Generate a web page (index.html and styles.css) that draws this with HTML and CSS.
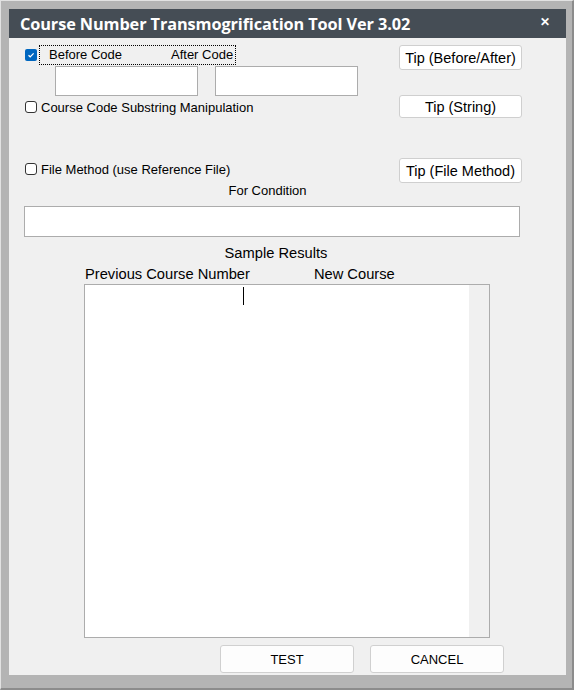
FILE: index.html
```html
<html>
<head>
	<link rel="stylesheet" href="styles.css">
</head>
<body>
<div class="frame">
	<div class="titlebar">
		<span class="title">Course Number Transmogrification Tool Ver 3.02</span>
		<span class="close">&#10005;</span>
	</div>
	<div class="content">
		<div class="top">
			<div class="options">
				<div class="opt-before">
					<span class="check checked">
						<svg width="12" height="12" viewBox="0 0 12 12"><path d="M3.5 6.2 L5.2 7.8 L8.6 4.3" fill="none" stroke="#fff" stroke-width="1.2"/></svg>
					</span>
					<span class="focus-label">
						<span class="lbl-before">Before Code</span>
						<span class="lbl-after">After Code</span>
					</span>
				</div>
				<div class="codes">
					<input type="text" class="code-box first">
					<input type="text" class="code-box second">
				</div>
				<div class="opt substring">
					<span class="check"></span>
					<span>Course Code Substring Manipulation</span>
				</div>
				<div class="opt filemethod">
					<span class="check"></span>
					<span>File Method (use Reference File)</span>
				</div>
			</div>
			<div class="tips">
				<button class="tip tip-ba">Tip (Before/After)</button>
				<button class="tip tip-str">Tip (String)</button>
				<button class="tip tip-file">Tip (File Method)</button>
			</div>
		</div>
		<div class="cond-label">For Condition</div>
		<input type="text" class="cond-box">
		<div class="sample-title">Sample Results</div>
		<div class="col-heads">
			<span class="head-prev">Previous Course Number</span>
			<span class="head-new">New Course</span>
		</div>
		<div class="results">
			<div class="results-list"><span class="caret"></span></div>
			<div class="results-scroll"></div>
		</div>
		<div class="actions">
			<button class="act">TEST</button>
			<button class="act">CANCEL</button>
		</div>
	</div>
</div>
</body>
</html>
```

FILE: styles.css
```css
body {
	margin: 0;
	background: #d4d4d4;
	font-family: "Liberation Sans", Arial, sans-serif;
}

.frame {
	width: 557px;
	height: 666px;
	background: #b4b4b4;
	border-top: 1px solid #e2e2e2;
	border-left: 1px solid #e2e2e2;
	border-right: 2px solid #8c8c8c;
	border-bottom: 2px solid #8c8c8c;
	padding: 8px 6px 13px 8px;
	display: flex;
	flex-direction: column;
}

.titlebar {
	height: 29px;
	background: #454d55;
	color: #fff;
	display: flex;
	align-items: center;
	justify-content: space-between;
	padding: 0 16px 0 11px;
	flex-shrink: 0;
}
.title {
	font-family: "Open Sans", sans-serif;
	font-weight: bold;
	font-size: 16.3px;
	letter-spacing: -0.1px;
}
.close {
	font-size: 12px;
	font-weight: bold;
	margin-top: -4px;
}

.content {
	flex: 1;
	background: #f0f0f0;
	padding-left: 15px;
	font-size: 13px;
	color: #000;
}

/* top part: options on the left, tip buttons on the right */
.top {
	display: flex;
	justify-content: space-between;
	padding-right: 44px;
}
.options {
	display: flex;
	flex-direction: column;
}
.opt-before {
	margin-top: 7px;
	height: 20px;
	display: flex;
}
.check {
	width: 10px;
	height: 10px;
	border: 1px solid #333;
	border-radius: 3px;
	background: #fff;
	flex-shrink: 0;
}
.check.checked {
	width: 12px;
	height: 12px;
	border: none;
	background: #0067c0;
	border-radius: 2px;
}
.check svg { display: block; }
.opt-before .check {
	margin: 4px 0 0 1px;
}
.focus-label {
	margin-left: 2px;
	width: 195px;
	height: 18px;
	border: 1px dotted #000;
	position: relative;
	line-height: 18px;
}
.lbl-before { margin-left: 9px; }
.lbl-after { position: absolute; left: 131px; }

.codes {
	margin-top: 1px;
	display: flex;
}
.code-box {
	width: 143px;
	height: 30px;
	border: 1px solid #acacac;
	background: #fff;
	box-sizing: border-box;
	margin: 0;
}
.code-box.first { margin-left: 31px; }
.code-box.second { margin-left: 17px; }

.opt {
	display: flex;
	align-items: center;
	height: 16px;
}
.opt .check { margin: 0 4px 0 1px; }
.substring { margin-top: 3px; }
.filemethod { margin-top: 46px; }

.tips {
	display: flex;
	flex-direction: column;
	width: 123px;
}
.tip {
	font-family: "Liberation Sans", Arial, sans-serif;
	font-size: 14.5px;
	color: #000;
	background: #fff;
	border: 1px solid #cfcfcf;
	border-radius: 3px;
	padding: 0;
	margin: 0;
}
.tip-ba { margin-top: 7px; height: 25px; }
.tip-str { margin-top: 25px; height: 23px; }
.tip-file { margin-top: 40px; height: 25px; }

.cond-label {
	width: 487px;
	padding-right: 9px;
	text-align: center;
	margin-top: -1px;
	height: 17px;
	line-height: 17px;
}
.cond-box {
	display: block;
	width: 496px;
	height: 31px;
	margin: 7px 0 0 0;
	border: 1px solid #acacac;
	background: #fff;
	box-sizing: border-box;
}

.sample-title {
	width: 504px;
	text-align: center;
	font-size: 14.7px;
	margin-top: 8px;
	height: 17px;
	line-height: 17px;
}
.col-heads {
	font-size: 14.7px;
	margin: 4px 0 0 61px;
	height: 17px;
	line-height: 17px;
	display: flex;
}
.head-new { margin-left: 64px; }

.results {
	margin: 1px 0 0 60px;
	width: 406px;
	height: 354px;
	border: 1px solid #acacac;
	box-sizing: border-box;
	display: flex;
	background: #fff;
}
.results-list {
	flex: 1;
	position: relative;
}
.caret {
	position: absolute;
	left: 158px;
	top: 2px;
	width: 1px;
	height: 18px;
	background: #000;
}
.results-scroll {
	width: 20px;
	background: #f0f0f0;
}

.actions {
	display: flex;
	gap: 16px;
	margin: 7px 0 0 196px;
}
.act {
	width: 134px;
	height: 28px;
	font-family: "Liberation Sans", Arial, sans-serif;
	font-size: 13px;
	color: #000;
	background: #fdfdfd;
	border: 1px solid #d0d0d0;
	border-radius: 3px;
	padding: 0;
}
```
